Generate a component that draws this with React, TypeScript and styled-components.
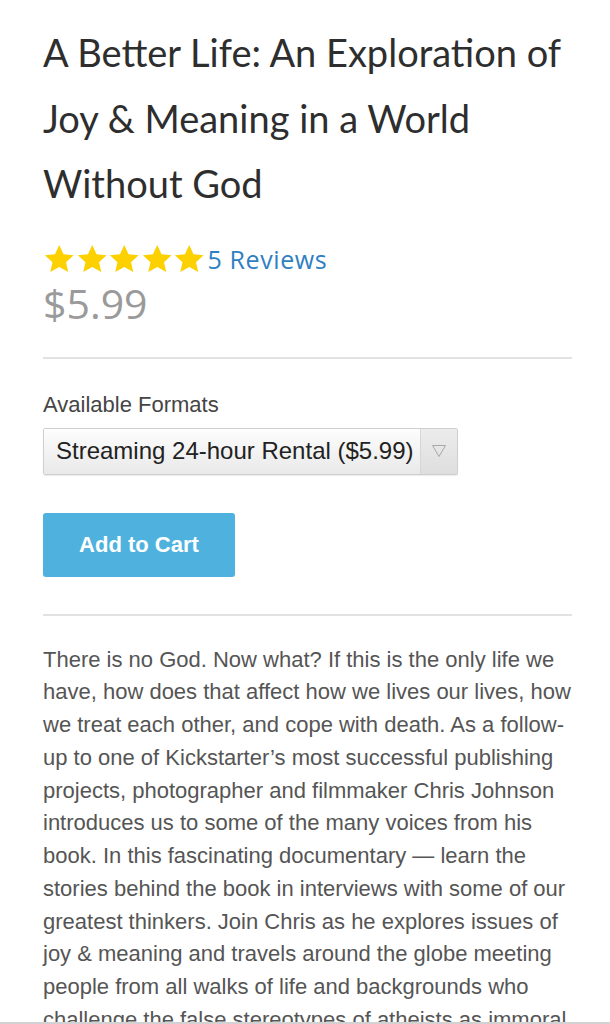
import React from "react";
import styled, { createGlobalStyle } from "styled-components";

const Global = createGlobalStyle`
  html, body { margin: 0; padding: 0; background: #fff; }
  body { -webkit-font-smoothing: antialiased; }
`;

const Page = styled.main`
  padding: 20px 38px 0 43px;
  width: 610px;
  box-sizing: border-box;
  height: 1024px;
  overflow: hidden;
`;

const Title = styled.h1`
  margin: 0;
  font-family: Lato, "Open Sans", sans-serif;
  font-weight: 400;
  font-size: 38px;
  line-height: 65.5px;
  color: #2e2e2e;
`;

const RatingRow = styled.div`
  display: flex;
  align-items: center;
  margin-top: 26px;
  height: 32px;
`;

const Stars = styled.div`
  display: flex;
`;

const ReviewsLink = styled.a`
  font-family: "Open Sans", sans-serif;
  font-size: 25px;
  color: #2f80c2;
  text-decoration: none;
  margin-left: 2px;
  letter-spacing: 0.6px;
`;

const Price = styled.div`
  font-family: "Open Sans", sans-serif;
  font-size: 41px;
  color: #9a9a9a;
  line-height: 52px;
  margin-top: 2px;
`;

const Divider = styled.hr<{ $top: number }>`
  border: 0;
  border-top: 2px solid #e2e2e2;
  margin: ${(p) => p.$top}px 0 0;
`;

const Label = styled.div`
  font-family: "Liberation Sans", Arial, sans-serif;
  font-size: 22px;
  color: #454545;
  margin-top: 33px;
`;

const Select = styled.div`
  display: flex;
  margin-top: 10px;
  width: 415px;
  height: 47px;
  box-sizing: border-box;
  border: 1px solid #cfcfcf;
  border-radius: 2px;
  background: linear-gradient(#fbfbfb, #e6e6e6);
  box-shadow: 0 1px 1px rgba(0,0,0,0.08);
`;

const SelectText = styled.div`
  flex: 1;
  display: flex;
  align-items: center;
  padding-left: 12px;
  font-family: "Liberation Sans", Arial, sans-serif;
  font-size: 24px;
  color: #222;
  background: linear-gradient(#fdfdfd, #e9e9e9);
`;

const SelectArrow = styled.div`
  width: 36px;
  display: flex;
  align-items: center;
  justify-content: center;
  border-left: 1px solid #d6d6d6;
  background: linear-gradient(#ececec, #dedede);
`;

const Button = styled.button`
  display: block;
  margin-top: 38px;
  width: 192px;
  height: 64px;
  border: 0;
  border-radius: 3px;
  background: #4fb2de;
  color: #fff;
  font-family: "Liberation Sans", Arial, sans-serif;
  font-weight: 700;
  font-size: 22px;
  padding: 0;
`;

const Description = styled.p`
  margin: 28px 0 0;
  font-family: "Liberation Sans", Arial, sans-serif;
  font-size: 22px;
  line-height: 32.75px;
  color: #555;
`;

const BottomEdge = styled.div`
  position: fixed;
  left: 0;
  right: 0;
  bottom: 0;
  height: 2px;
  background: #d2d2d2;
`;

const Star = () => (
  <svg width="32.5" height="30" viewBox="0 0 24 23">
    <path
      d="M12 0.8l3.3 7.1 7.7.8-5.8 5.2 1.7 7.6L12 17.6l-6.9 3.9 1.7-7.6L1 8.7l7.7-.8z"
      fill="#fdd000"
    />
  </svg>
);

export default function App() {
  return (
    <>
      <Global />
      <Page>
        <Title>A Better Life: An Exploration of Joy &amp; Meaning in a World Without God</Title>
        <RatingRow>
          <Stars>
            {[0, 1, 2, 3, 4].map((i) => (
              <Star key={i} />
            ))}
          </Stars>
          <ReviewsLink href="#">5 Reviews</ReviewsLink>
        </RatingRow>
        <Price>$5.99</Price>
        <Divider $top={28} />
        <Label>Available Formats</Label>
        <Select>
          <SelectText>Streaming 24-hour Rental ($5.99)</SelectText>
          <SelectArrow>
            <svg width="16" height="14" viewBox="0 0 16 14">
              <path d="M1.5 1.5h13L8 12.5z" fill="none" stroke="#a8a8a8" strokeWidth="1" />
            </svg>
          </SelectArrow>
        </Select>
        <Button>Add to Cart</Button>
        <Divider $top={37} />
        <Description>
          There is no God. Now what? If this is the only life we have, how does that affect how we lives our lives, how we treat each other, and cope with death. As a follow-up to one of Kickstarter’s most successful publishing projects, photographer and filmmaker Chris Johnson introduces us to some of the many voices from his book. In this fascinating documentary — learn the stories behind the book in interviews with some of our greatest thinkers. Join Chris as he explores issues of joy &amp; meaning and travels around the globe meeting people from all walks of life and backgrounds who challenge the false stereotypes of atheists as immoral and nihilistic.
        </Description>
      </Page>
      <BottomEdge />
    </>
  );
}
